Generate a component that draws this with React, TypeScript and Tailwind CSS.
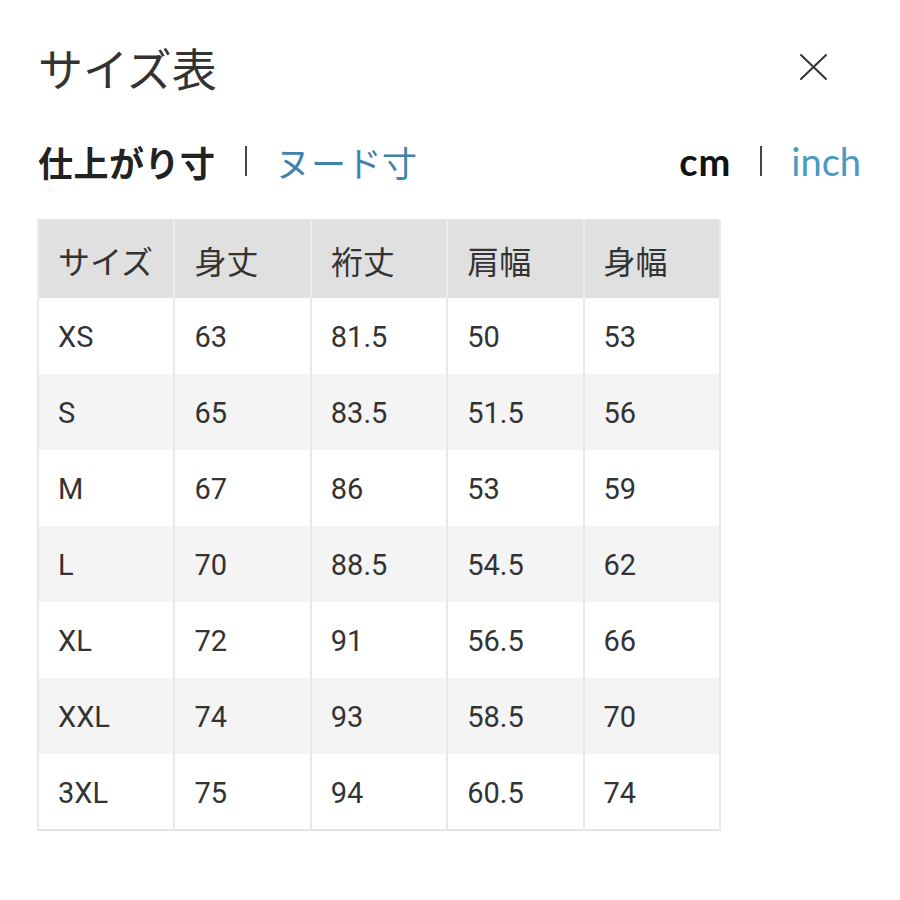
import React from 'react';

const headers = ['サイズ', '身丈', '裄丈', '肩幅', '身幅'];

const rows: string[][] = [
  ['XS', '63', '81.5', '50', '53'],
  ['S', '65', '83.5', '51.5', '56'],
  ['M', '67', '86', '53', '59'],
  ['L', '70', '88.5', '54.5', '62'],
  ['XL', '72', '91', '56.5', '66'],
  ['XXL', '74', '93', '58.5', '70'],
  ['3XL', '75', '94', '60.5', '74'],
];

export default function App() {
  return (
    <div
      className="w-[900px] h-[900px] bg-white text-[#333] pt-[45px] pl-[38px] pr-[39px]"
      style={{ fontFamily: 'Roboto, "Noto Sans CJK JP", sans-serif' }}
    >
      {/* Title */}
      <div className="flex items-center justify-between h-[44px]">
        <h1 className="text-[45px] leading-none font-normal text-[#333]" style={{ fontFamily: '"Noto Sans CJK JP", sans-serif' }}>
          サイズ表
        </h1>
        <button className="mr-[32px] w-[30px] h-[30px] flex items-center justify-center">
          <svg width="30" height="30" viewBox="0 0 30 30" fill="none" stroke="#333" strokeWidth="2" strokeLinecap="round">
            <line x1="2" y1="3" x2="27" y2="27" />
            <line x1="27" y1="3" x2="2" y2="27" />
          </svg>
        </button>
      </div>

      {/* Tabs */}
      <div className="flex items-center justify-between mt-[54px] h-[36px]">
        <div className="flex items-center" style={{ fontFamily: '"Noto Sans CJK JP", sans-serif' }}>
          <span className="text-[35px] leading-none font-bold text-[#222] tracking-[0.5px]">仕上がり寸</span>
          <span className="mx-[29px] w-[2px] h-[30px] bg-[#444]" />
          <span className="text-[35px] leading-none text-[#3f82ab] tracking-[0.5px]">ヌード寸</span>
        </div>
        <div className="flex items-center" style={{ fontFamily: 'Lato, sans-serif' }}>
          <span className="text-[38px] leading-none font-bold text-[#111] tracking-[1px]">cm</span>
          <span className="mx-[29px] w-[2px] h-[30px] bg-[#444]" />
          <span className="text-[38px] leading-none text-[#4a9ac2]">inch</span>
        </div>
      </div>

      {/* Table */}
      <table className="mt-[40px] -ml-[1px] w-[684px] table-fixed border-collapse border-2 border-[#e4e4e4]">
        <thead>
          <tr className="h-[78px] bg-[#e0e0e0]">
            {headers.map((h) => (
              <th
                key={h}
                className="text-left font-normal pl-[19px] text-[32px] text-[#333] border-x-2 border-[#ececec]"
                style={{ fontFamily: '"Noto Sans CJK JP", sans-serif' }}
              >
                {h}
              </th>
            ))}
          </tr>
        </thead>
        <tbody>
          {rows.map((r, i) => (
            <tr key={r[0]} className={`h-[76px] ${i % 2 === 1 ? 'bg-[#f4f4f4]' : 'bg-white'}`}>
              {r.map((c, j) => (
                <td key={j} className="pl-[19px] pt-[4px] text-[29px] text-[#333] border-x-2 border-[#e8e8e8]">
                  {c}
                </td>
              ))}
            </tr>
          ))}
        </tbody>
      </table>
    </div>
  );
}
